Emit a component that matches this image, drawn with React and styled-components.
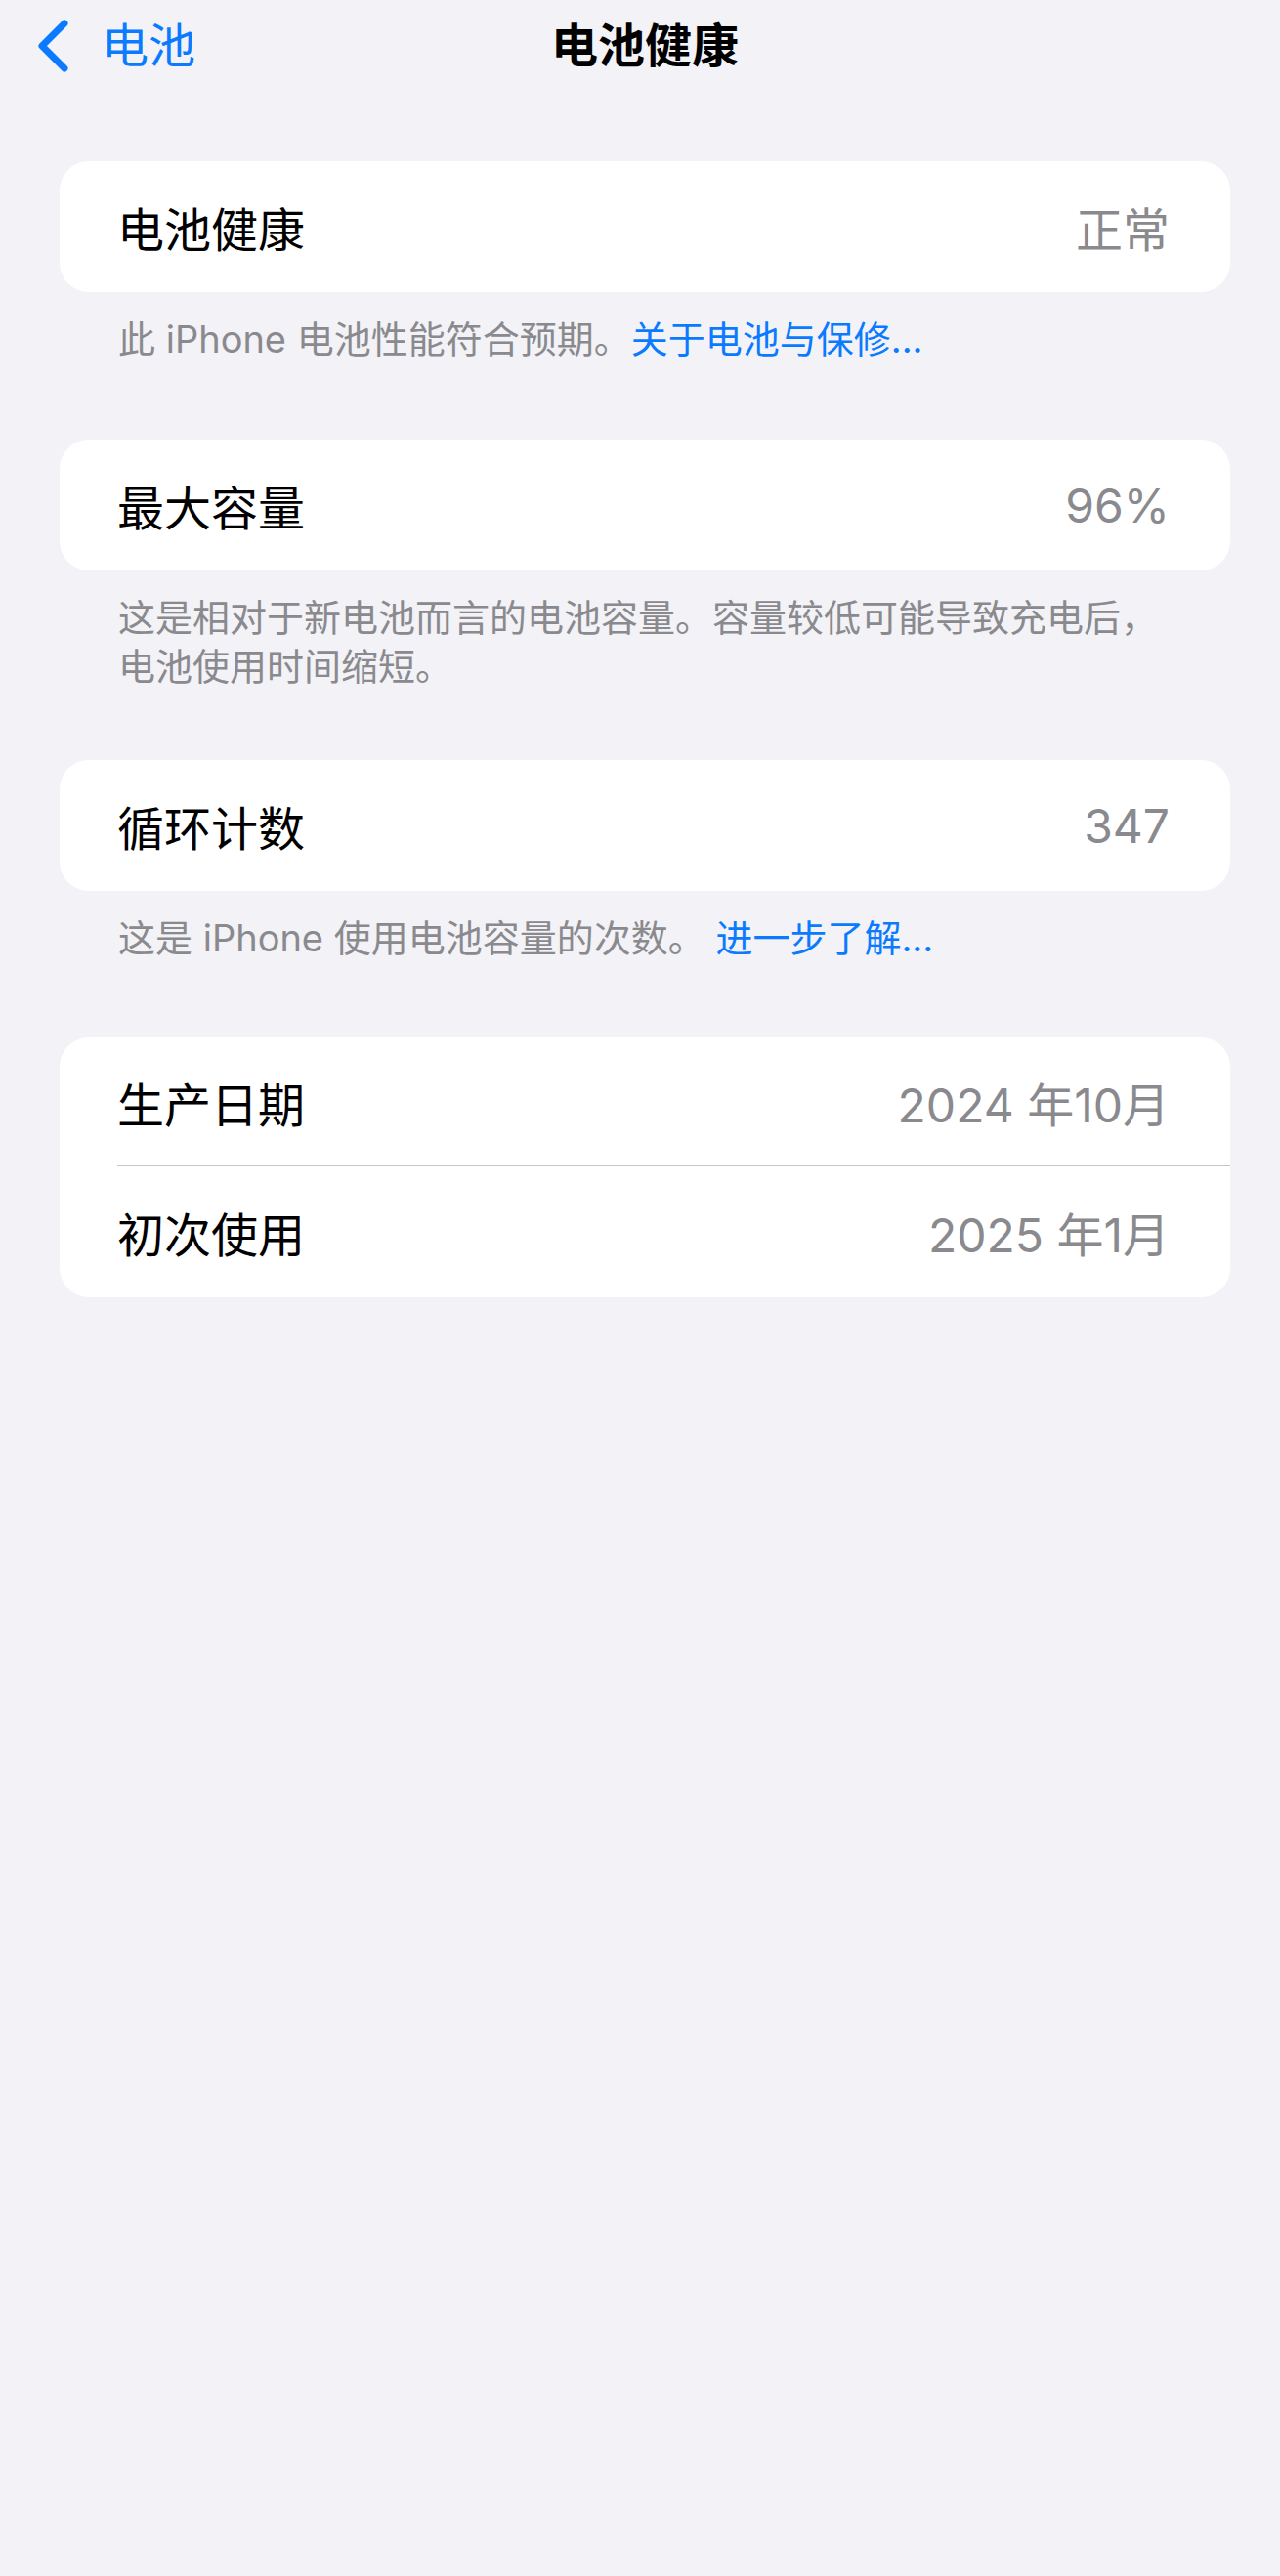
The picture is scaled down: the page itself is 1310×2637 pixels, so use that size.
import React from 'react';
import styled, { createGlobalStyle } from 'styled-components';

const GlobalStyle = createGlobalStyle`
  html, body {
    margin: 0;
    padding: 0;
    background: #f2f2f7;
  }
  body {
    font-family: "Inter", "Noto Sans CJK SC", sans-serif;
    -webkit-font-smoothing: antialiased;
  }
`;

const Screen = styled.div`
  min-height: 2637px;
  background: #f2f2f7;
`;

const NavBar = styled.header`
  display: grid;
  grid-template-columns: 1fr auto 1fr;
  align-items: center;
  height: 94px;
  padding: 0 28px 0 38px;
`;

const BackBtn = styled.button`
  display: flex;
  align-items: center;
  gap: 32px;
  justify-self: start;
  padding: 0;
  border: none;
  background: transparent;
  color: #0a7aff;
  font-family: inherit;
  font-size: 48px;
  line-height: 1;
  cursor: pointer;
`;

const Title = styled.h1`
  margin: 0;
  font-size: 48px;
  font-weight: 700;
  line-height: 1;
  color: #000;
`;

const Content = styled.main`
  padding: 71px 51px 0 61px;
`;

const Section = styled.section`
  margin-bottom: ${p => p.gap || 75}px;
`;

const Card = styled.div`
  background: #fff;
  border-radius: 30px;
  overflow: hidden;
`;

const Row = styled.div`
  display: flex;
  align-items: center;
  justify-content: space-between;
  height: ${p => p.h || 134}px;
  padding: 0 62px 0 59px;
  font-size: 48px;
`;

const Label = styled.span`
  color: #000;
`;

const Value = styled.span`
  color: #8a8a8e;
`;

const Separator = styled.div`
  height: 1px;
  margin-left: 59px;
  background: #c6c6c8;
`;

const Footer = styled.p`
  margin: 0;
  padding: 23px 59px 0 60px;
  font-size: 38px;
  line-height: 50px;
  color: #8a8a8e;
`;

const Link = styled.a`
  color: #0a7aff;
  text-decoration: none;
`;

const ChevronLeft = () => (
  <svg width="34" height="58" viewBox="0 0 34 58" fill="none">
    <path
      d="M28 6 L5 29 L28 52"
      stroke="currentColor"
      strokeWidth="7"
      strokeLinecap="round"
      strokeLinejoin="round"
    />
  </svg>
);

const App = () => {
  return (
    <Screen>
      <GlobalStyle />
      <NavBar>
        <BackBtn>
          <ChevronLeft />
          <span>电池</span>
        </BackBtn>
        <Title>电池健康</Title>
        <span />
      </NavBar>

      <Content>
        <Section gap={78}>
          <Card>
            <Row>
              <Label>电池健康</Label>
              <Value>正常</Value>
            </Row>
          </Card>
          <Footer>
            此 iPhone 电池性能符合预期。<Link href="#">关于电池与保修...</Link>
          </Footer>
        </Section>

        <Section gap={71}>
          <Card>
            <Row>
              <Label>最大容量</Label>
              <Value>96%</Value>
            </Row>
          </Card>
          <Footer>
            这是相对于新电池而言的电池容量。容量较低可能导致充电后，电池使用时间缩短。
          </Footer>
        </Section>

        <Section gap={77}>
          <Card>
            <Row>
              <Label>循环计数</Label>
              <Value>347</Value>
            </Row>
          </Card>
          <Footer>
            这是 iPhone 使用电池容量的次数。 <Link href="#">进一步了解...</Link>
          </Footer>
        </Section>

        <Section>
          <Card>
            <Row h={131}>
              <Label>生产日期</Label>
              <Value>2024 年10月</Value>
            </Row>
            <Separator />
            <Row h={134}>
              <Label>初次使用</Label>
              <Value>2025 年1月</Value>
            </Row>
          </Card>
        </Section>
      </Content>
    </Screen>
  );
};

export default App;
